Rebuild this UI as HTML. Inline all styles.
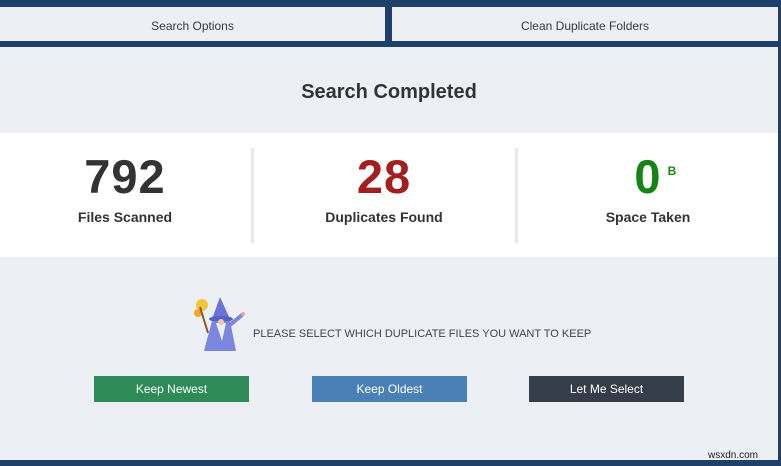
<!DOCTYPE html>
<html><head><style>
*{margin:0;padding:0;box-sizing:border-box}
body{width:781px;height:466px;background:#1f4068;position:relative;overflow:hidden;font-family:"Liberation Sans",sans-serif}
.tab{position:absolute;top:7px;height:34px;padding-top:3px;background:#eceff4;color:#3a3a3a;font-size:12px;display:flex;align-items:center;justify-content:center}
#main{position:absolute;left:0;top:47px;width:778px;height:413px;background:#eceff4}
h1{position:absolute;top:34px;width:100%;text-align:center;font-size:20px;font-weight:bold;color:#333}
#stats{position:absolute;top:86px;left:0;width:778px;height:124px;background:#fff}
.st{position:absolute;top:0;text-align:center}
.num{font-size:47px;font-weight:bold;margin-top:17px;line-height:54px;letter-spacing:1px}
.lab{font-size:14px;font-weight:bold;color:#333;margin-top:5px}
.div{position:absolute;top:15px;width:3px;height:95px;background:#e6e8ec}
.msg{position:absolute;left:253px;top:281px;font-size:11px;color:#444}
.btn{position:absolute;top:329px;width:155px;height:26px;color:#fff;font-size:12px;display:flex;align-items:center;justify-content:center}
</style></head><body>
<div class="tab" style="left:0;width:385px">Search Options</div>
<div class="tab" style="left:392px;width:386px">Clean Duplicate Folders</div>
<div id="main">
<h1>Search Completed</h1>
<div id="stats">
<div class="st" style="left:0;width:250px"><div class="num" style="color:#333">792</div><div class="lab">Files Scanned</div></div>
<div class="div" style="left:251px"></div>
<div class="st" style="left:254px;width:260px"><div class="num" style="color:#a31f1f">28</div><div class="lab">Duplicates Found</div></div>
<div class="div" style="left:515px"></div>
<div class="st" style="left:518px;width:260px"><div class="num" style="color:#148414;position:relative">0<span style="font-size:12px;position:absolute;top:-6px;margin-left:6px">B</span></div><div class="lab">Space Taken</div></div>
</div>
<svg style="position:absolute;left:190px;top:248px" width="56" height="58" viewBox="0 0 56 58">
<circle cx="12" cy="10" r="6" fill="#f3c53a"/><circle cx="8" cy="18" r="4" fill="#f5a623"/>
<line x1="10" y1="12" x2="18" y2="38" stroke="#8a5a2b" stroke-width="2"/>
<polygon points="30,2 22,24 40,24" fill="#6a74d8"/>
<ellipse cx="31" cy="24" rx="12" ry="3" fill="#5560c8"/>
<polygon points="22,26 40,26 46,56 14,56" fill="#7a86e0"/>
<polygon points="26,28 36,28 32,46" fill="#eee"/>
<circle cx="31" cy="27" r="3" fill="#f2c9a5"/>
<line x1="40" y1="30" x2="52" y2="20" stroke="#7a86e0" stroke-width="4"/>
<circle cx="53" cy="19" r="2" fill="#f0a0a0"/>
</svg>
<div class="msg">PLEASE SELECT WHICH DUPLICATE FILES YOU WANT TO KEEP</div>
<div class="btn" style="left:94px;background:#2e8b57">Keep Newest</div>
<div class="btn" style="left:312px;background:#4a80b5">Keep Oldest</div>
<div class="btn" style="left:529px;background:#343d49">Let Me Select</div>
<div style="position:absolute;left:708px;top:403px;font-size:10px;color:#222">wsxdn.com</div>
</div>
</body></html>
